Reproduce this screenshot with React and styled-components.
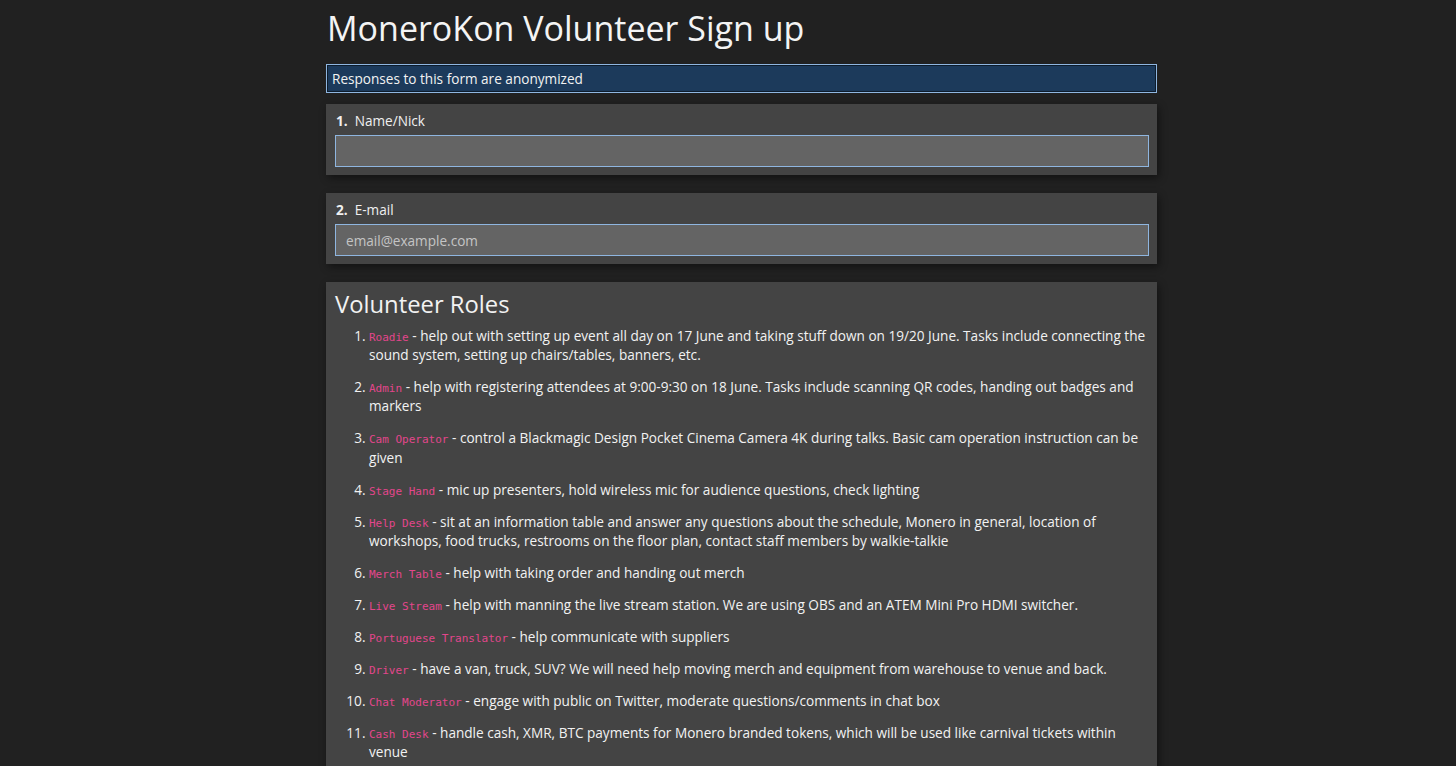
import React from 'react'
import styled, { createGlobalStyle } from 'styled-components'

const GlobalStyle = createGlobalStyle`
    html, body {
        margin: 0;
        padding: 0;
        background: #212121;
        color: #f2f2f2;
        font-family: "Open Sans", "Noto Sans", sans-serif;
    }
`

const roles = [
    ['Roadie', 'help out with setting up event all day on 17 June and taking stuff down on 19/20 June. Tasks include connecting the sound system, setting up chairs/tables, banners, etc.'],
    ['Admin', 'help with registering attendees at 9:00-9:30 on 18 June. Tasks include scanning QR codes, handing out badges and markers'],
    ['Cam Operator', 'control a Blackmagic Design Pocket Cinema Camera 4K during talks. Basic cam operation instruction can be given'],
    ['Stage Hand', 'mic up presenters, hold wireless mic for audience questions, check lighting'],
    ['Help Desk', 'sit at an information table and answer any questions about the schedule, Monero in general, location of workshops, food trucks, restrooms on the floor plan, contact staff members by walkie-talkie'],
    ['Merch Table', 'help with taking order and handing out merch'],
    ['Live Stream', 'help with manning the live stream station. We are using OBS and an ATEM Mini Pro HDMI switcher.'],
    ['Portuguese Translator', 'help communicate with suppliers'],
    ['Driver', 'have a van, truck, SUV? We will need help moving merch and equipment from warehouse to venue and back.'],
    ['Chat Moderator', 'engage with public on Twitter, moderate questions/comments in chat box'],
    ['Cash Desk', 'handle cash, XMR, BTC payments for Monero branded tokens, which will be used like carnival tickets within venue'],
]

export default function App() {
    return (
        <>
            <GlobalStyle />
            <Page>
                <Title>MoneroKon Volunteer Sign up</Title>
                <Notice>Responses to this form are anonymized</Notice>
                <Card>
                    <Label><Num>1.</Num>Name/Nick</Label>
                    <Input type="text" />
                </Card>
                <Card>
                    <Label><Num>2.</Num>E-mail</Label>
                    <Input type="email" placeholder="email@example.com" />
                </Card>
                <Card>
                    <Heading>Volunteer Roles</Heading>
                    <Roles>
                        {roles.map(([name, text]) => (
                            <Role key={name}>
                                <Code>{name}</Code> - {text}
                            </Role>
                        ))}
                    </Roles>
                </Card>
            </Page>
        </>
    )
}

const Page = styled.div`
    width: 831px;
    margin-left: 326px;
    padding-bottom: 40px;
`

const Title = styled.h1`
    margin: 0 0 16px;
    padding: 8px 0 0 1px;
    font-size: 34px;
    font-weight: 400;
    line-height: 40px;
    color: #f4f4f4;
`

const Notice = styled.div`
    box-sizing: border-box;
    height: 29px;
    padding: 4px 5px;
    background: #1c3a5b;
    border: 1px solid #8fb6e0;
    box-shadow: 0 0 0 1px #0d1c2c inset;
    font-size: 13.6px;
    line-height: 19px;
    margin-bottom: 11px;
`

const Card = styled.div`
    background: #444444;
    padding: 8px;
    margin-bottom: 18px;
    box-shadow: 2px 3px 8px rgba(0, 0, 0, 0.45);
`

const Label = styled.div`
    font-size: 13.6px;
    line-height: 18px;
    margin-bottom: 5px;
    padding-left: 2px;
    color: #f0f0f0;
`

const Num = styled.b`
    font-weight: 700;
    margin-right: 7px;
`

const Input = styled.input`
    display: block;
    box-sizing: border-box;
    width: calc(100% - 1px);
    height: 32px;
    margin: 0 0 0 1px;
    padding: 0 10px;
    background: #646464;
    border: 1px solid #8fb6e0;
    outline: none;
    color: #eee;
    font-family: "Open Sans", sans-serif;
    font-size: 13.6px;

    &::placeholder {
        color: #c4c4c4;
    }
`

const Heading = styled.h2`
    margin: 0 0 7px 1px;
    font-size: 23.8px;
    font-weight: 400;
    line-height: 29px;
`

const Roles = styled.ol`
    margin: 0;
    padding-left: 35px;
`

const Role = styled.li`
    font-size: 13.6px;
    line-height: 19.2px;
    margin-bottom: 12.8px;
`

const Code = styled.code`
    font-family: "DejaVu Sans Mono", monospace;
    font-size: 11px;
    line-height: 1;
    color: #e3468c;
`
